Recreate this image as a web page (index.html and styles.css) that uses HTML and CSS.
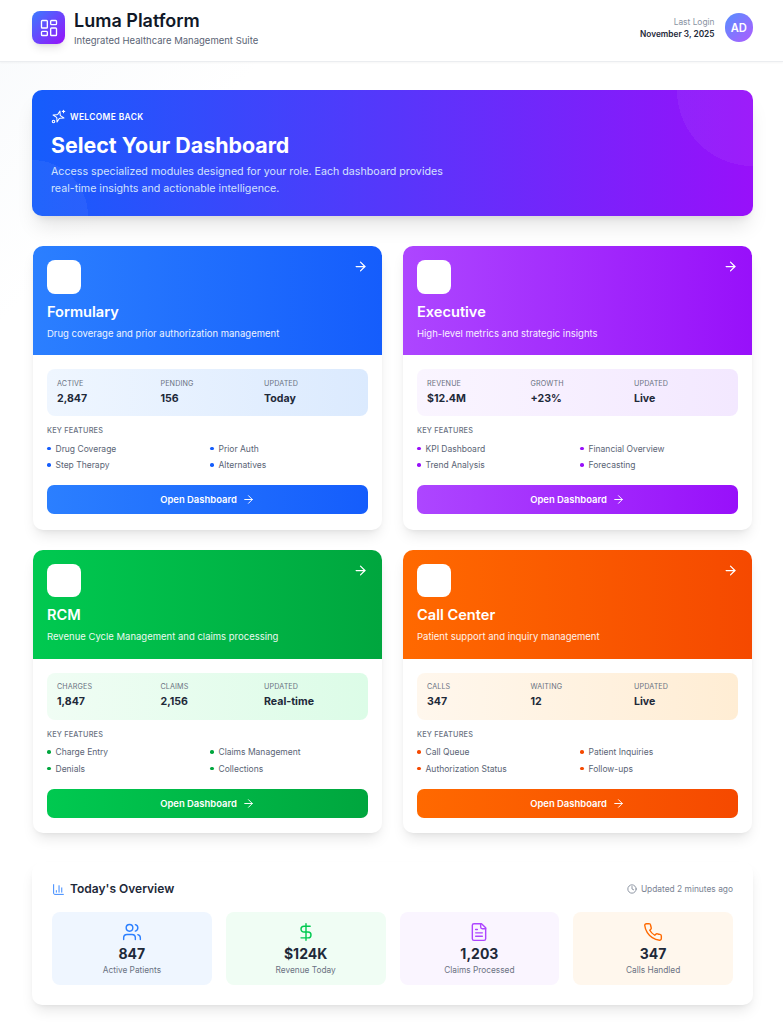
FILE: index.html
```html
<!DOCTYPE html>
<html lang="en">
<head>
<meta charset="utf-8">
<title>Luma Platform</title>
<link rel="stylesheet" href="styles.css">
</head>
<body>
<svg class="defs" width="0" height="0" aria-hidden="true">
  <symbol id="i-arrow" viewBox="0 0 24 24"><path d="M5 12h14"/><path d="m12 5 7 7-7 7"/></symbol>
</svg>
<header class="topbar">
  <div class="brand">
    <div class="logo">
      <svg class="ic" viewBox="0 0 24 24"><rect x="3" y="3" width="7" height="9" rx="1"/><rect x="14" y="3" width="7" height="5" rx="1"/><rect x="14" y="12" width="7" height="9" rx="1"/><rect x="3" y="16" width="7" height="5" rx="1"/></svg>
    </div>
    <div>
      <h1 class="brand-name">Luma Platform</h1>
      <p class="brand-sub">Integrated Healthcare Management Suite</p>
    </div>
  </div>
  <div class="user">
    <div class="login">
      <div class="login-label">Last Login</div>
      <div class="login-date">November 3, 2025</div>
    </div>
    <div class="avatar">AD</div>
  </div>
</header>
<main class="page">
  <section class="hero">
    <div class="hero-eyebrow">
      <svg class="ic hero-ic" viewBox="0 0 24 24"><path d="m12 3-1.9 5.8a2 2 0 0 1-1.3 1.3L3 12l5.8 1.9a2 2 0 0 1 1.3 1.3L12 21l1.9-5.8a2 2 0 0 1 1.3-1.3L21 12l-5.8-1.9a2 2 0 0 1-1.3-1.3Z" transform="rotate(15 12 12)"/><path d="M20 2v4"/><path d="M22 4h-4"/><circle cx="4" cy="20" r="2"/></svg>
      <span>WELCOME BACK</span>
    </div>
    <h2 class="hero-title">Select Your Dashboard</h2>
    <p class="hero-text">Access specialized modules designed for your role. Each dashboard provides real-time insights and actionable intelligence.</p>
  </section>

  <section class="cards">
    <article class="card blue">
      <div class="card-head">
        <div class="card-top"><div class="card-icon"></div><svg class="ic head-arrow"><use href="#i-arrow"/></svg></div>
        <h3 class="card-title">Formulary</h3>
        <p class="card-desc">Drug coverage and prior authorization management</p>
      </div>
      <div class="card-body">
        <div class="stats">
          <div><div class="stat-label">ACTIVE</div><div class="stat-value">2,847</div></div>
          <div><div class="stat-label">PENDING</div><div class="stat-value">156</div></div>
          <div><div class="stat-label">UPDATED</div><div class="stat-value">Today</div></div>
        </div>
        <div class="kf">KEY FEATURES</div>
        <ul class="features"><li>Drug Coverage</li><li>Prior Auth</li><li>Step Therapy</li><li>Alternatives</li></ul>
        <button class="open">Open Dashboard<svg class="ic btn-arrow"><use href="#i-arrow"/></svg></button>
      </div>
    </article>

    <article class="card purple">
      <div class="card-head">
        <div class="card-top"><div class="card-icon"></div><svg class="ic head-arrow"><use href="#i-arrow"/></svg></div>
        <h3 class="card-title">Executive</h3>
        <p class="card-desc">High-level metrics and strategic insights</p>
      </div>
      <div class="card-body">
        <div class="stats">
          <div><div class="stat-label">REVENUE</div><div class="stat-value">$12.4M</div></div>
          <div><div class="stat-label">GROWTH</div><div class="stat-value">+23%</div></div>
          <div><div class="stat-label">UPDATED</div><div class="stat-value">Live</div></div>
        </div>
        <div class="kf">KEY FEATURES</div>
        <ul class="features"><li>KPI Dashboard</li><li>Financial Overview</li><li>Trend Analysis</li><li>Forecasting</li></ul>
        <button class="open">Open Dashboard<svg class="ic btn-arrow"><use href="#i-arrow"/></svg></button>
      </div>
    </article>

    <article class="card green">
      <div class="card-head">
        <div class="card-top"><div class="card-icon"></div><svg class="ic head-arrow"><use href="#i-arrow"/></svg></div>
        <h3 class="card-title">RCM</h3>
        <p class="card-desc">Revenue Cycle Management and claims processing</p>
      </div>
      <div class="card-body">
        <div class="stats">
          <div><div class="stat-label">CHARGES</div><div class="stat-value">1,847</div></div>
          <div><div class="stat-label">CLAIMS</div><div class="stat-value">2,156</div></div>
          <div><div class="stat-label">UPDATED</div><div class="stat-value">Real-time</div></div>
        </div>
        <div class="kf">KEY FEATURES</div>
        <ul class="features"><li>Charge Entry</li><li>Claims Management</li><li>Denials</li><li>Collections</li></ul>
        <button class="open">Open Dashboard<svg class="ic btn-arrow"><use href="#i-arrow"/></svg></button>
      </div>
    </article>

    <article class="card orange">
      <div class="card-head">
        <div class="card-top"><div class="card-icon"></div><svg class="ic head-arrow"><use href="#i-arrow"/></svg></div>
        <h3 class="card-title">Call Center</h3>
        <p class="card-desc">Patient support and inquiry management</p>
      </div>
      <div class="card-body">
        <div class="stats">
          <div><div class="stat-label">CALLS</div><div class="stat-value">347</div></div>
          <div><div class="stat-label">WAITING</div><div class="stat-value">12</div></div>
          <div><div class="stat-label">UPDATED</div><div class="stat-value">Live</div></div>
        </div>
        <div class="kf">KEY FEATURES</div>
        <ul class="features"><li>Call Queue</li><li>Patient Inquiries</li><li>Authorization Status</li><li>Follow-ups</li></ul>
        <button class="open">Open Dashboard<svg class="ic btn-arrow"><use href="#i-arrow"/></svg></button>
      </div>
    </article>
  </section>

  <section class="overview">
    <div class="ov-head">
      <div class="ov-title">
        <svg class="ic ov-title-ic" viewBox="0 0 24 24"><path d="M3 3v16a2 2 0 0 0 2 2h16"/><path d="M18 17V9"/><path d="M13 17V5"/><path d="M8 17v-3"/></svg>
        <h3>Today's Overview</h3>
      </div>
      <div class="ov-updated">
        <svg class="ic ov-clock" viewBox="0 0 24 24"><circle cx="12" cy="12" r="10"/><path d="M12 6v6l4 2"/></svg>
        <span>Updated 2 minutes ago</span>
      </div>
    </div>
    <div class="tiles">
      <div class="tile t-blue">
        <svg class="ic tile-ic" viewBox="0 0 24 24"><path d="M16 21v-2a4 4 0 0 0-4-4H6a4 4 0 0 0-4 4v2"/><circle cx="9" cy="7" r="4"/><path d="M22 21v-2a4 4 0 0 0-3-3.87"/><path d="M16 3.13a4 4 0 0 1 0 7.75"/></svg>
        <div class="tile-value">847</div><div class="tile-label">Active Patients</div>
      </div>
      <div class="tile t-green">
        <svg class="ic tile-ic" viewBox="0 0 24 24"><path d="M12 2v20"/><path d="M17 5H9.5a3.5 3.5 0 0 0 0 7h5a3.5 3.5 0 0 1 0 7H6"/></svg>
        <div class="tile-value">$124K</div><div class="tile-label">Revenue Today</div>
      </div>
      <div class="tile t-purple">
        <svg class="ic tile-ic" viewBox="0 0 24 24"><path d="M15 2H6a2 2 0 0 0-2 2v16a2 2 0 0 0 2 2h12a2 2 0 0 0 2-2V7Z"/><path d="M14 2v4a2 2 0 0 0 2 2h4"/><path d="M10 9H8"/><path d="M16 13H8"/><path d="M16 17H8"/></svg>
        <div class="tile-value">1,203</div><div class="tile-label">Claims Processed</div>
      </div>
      <div class="tile t-orange">
        <svg class="ic tile-ic" viewBox="0 0 24 24"><path d="M22 16.92v3a2 2 0 0 1-2.18 2 19.79 19.79 0 0 1-8.63-3.07 19.5 19.5 0 0 1-6-6 19.79 19.79 0 0 1-3.07-8.67A2 2 0 0 1 4.11 2h3a2 2 0 0 1 2 1.72 12.84 12.84 0 0 0 .7 2.81 2 2 0 0 1-.45 2.11L8.09 9.91a16 16 0 0 0 6 6l1.27-1.27a2 2 0 0 1 2.11-.45 12.84 12.84 0 0 0 2.81.7A2 2 0 0 1 22 16.92z"/></svg>
        <div class="tile-value">347</div><div class="tile-label">Calls Handled</div>
      </div>
    </div>
  </section>
</main>
</body>
</html>
```

FILE: styles.css
```css
* { box-sizing: border-box; }
html, body { margin: 0; padding: 0; }
body {
  font-family: Inter, "Liberation Sans", sans-serif;
  background: linear-gradient(135deg, #f8fafc 0, #ffffff 18%, #ffffff 100%);
  color: #101828;
  min-height: 1024px;
}
h1, h2, h3, p, ul { margin: 0; padding: 0; }
.defs { position: absolute; }
.ic {
  fill: none;
  stroke: currentColor;
  stroke-width: 2;
  stroke-linecap: round;
  stroke-linejoin: round;
  display: block;
  flex: none;
}

.topbar {
  height: 62px;
  background: #fff;
  border-bottom: 1px solid #ebedf0;
  box-shadow: 0 1px 2px rgba(0, 0, 0, .04);
  padding: 0 30px 6px 32px;
  display: flex;
  justify-content: space-between;
  align-items: center;
}
.brand { display: flex; align-items: center; gap: 9px; }
.logo {
  width: 33px;
  height: 33px;
  border-radius: 8px;
  background: linear-gradient(135deg, #3b7bff, #9810fa);
  color: #fff;
  display: flex;
  align-items: center;
  justify-content: center;
  box-shadow: 0 6px 9px -2px rgba(0, 0, 0, .1), 0 3px 4px -3px rgba(0, 0, 0, .1);
}
.logo .ic { width: 20px; height: 20px; stroke-width: 1.6; }
.brand-name { font-size: 18px; line-height: 25px; font-weight: 600; color: #101828; }
.brand-sub { font-size: 9.5px; line-height: 15px; color: #5a6475; }
.user { display: flex; align-items: center; gap: 10px; }
.login { text-align: right; }
.login-label { font-size: 8.4px; line-height: 12px; color: #8a93a3; }
.login-date { font-size: 8.3px; line-height: 12px; font-weight: 600; color: #1e2939; }
.avatar {
  width: 28.5px;
  height: 28.5px;
  border-radius: 50%;
  background: linear-gradient(135deg, #5490ff, #b05cff);
  color: #fff;
  font-size: 11.2px;
  font-weight: 600;
  display: flex;
  align-items: center;
  justify-content: center;
}

.page { padding: 28px 30px 0 32px; }

.hero {
  height: 126px;
  border-radius: 10px;
  background-color: #155dfc;
  background-image:
    radial-gradient(circle 76px at 100% 0, rgba(255, 255, 255, .05) 100%, transparent 100%),
    radial-gradient(circle 56px at 0 100%, rgba(255, 255, 255, .05) 100%, transparent 100%),
    linear-gradient(90deg, #155dfc, #9810fa);
  box-shadow: 0 14px 20px -4px rgba(0, 0, 0, .1), 0 6px 8px -5px rgba(0, 0, 0, .1);
  padding: 19px 19px;
  color: #fff;
}
.hero-eyebrow { display: flex; align-items: center; gap: 4px; font-size: 8.4px; line-height: 14px; font-weight: 600; letter-spacing: .38px; }
.hero-ic { width: 15px; height: 15px; stroke-width: 1.7; }
.hero-title { font-size: 21.4px; line-height: 28px; font-weight: 700; margin-top: 7px; }
.hero-text { font-size: 10.7px; line-height: 17px; color: #dbeafe; max-width: 400px; margin-top: 3.5px; opacity: .95; }

.cards {
  display: grid;
  grid-template-columns: 1fr 1fr;
  column-gap: 21px;
  row-gap: 20px;
  padding: 0 1px;
  margin-top: 30px;
}
.card {
  background: #fff;
  border-radius: 10px;
  overflow: hidden;
  box-shadow: 0 8px 14px -3px rgba(0, 0, 0, .1), 0 3px 6px -4px rgba(0, 0, 0, .1);
}
.blue { --from: #2b7fff; --to: #155dfc; --soft1: #eff6ff; --soft2: #dbeafe; }
.purple { --from: #ad46ff; --to: #9810fa; --soft1: #faf5ff; --soft2: #f3e8ff; }
.green { --from: #00c950; --to: #00a63e; --soft1: #f0fdf4; --soft2: #dcfce7; }
.orange { --from: #ff6900; --to: #f54900; --soft1: #fff7ed; --soft2: #ffedd4; }
.card-head {
  height: 109px;
  padding: 14px 14px 0;
  background: linear-gradient(90deg, var(--from), var(--to));
  color: #fff;
}
.card-top { display: flex; justify-content: space-between; align-items: flex-start; }
.card-icon { width: 33.5px; height: 33.5px; background: #fff; border-radius: 8px; }
.head-arrow { width: 15px; height: 15px; margin-top: -1px; }
.card-title { font-size: 14.6px; line-height: 22px; font-weight: 600; margin-top: 7px; }
.card-desc { font-size: 9.5px; line-height: 14px; margin-top: 4px; opacity: .92; }
.card-body { padding: 14px 14px 15.5px; }
.stats {
  height: 47px;
  border-radius: 8px;
  background: linear-gradient(90deg, var(--soft1), var(--soft2));
  padding: 8.5px 10px 0;
  display: grid;
  grid-template-columns: repeat(3, 1fr);
  column-gap: 9.5px;
}
.stat-label { font-size: 7.2px; line-height: 11px; color: #6a7282; letter-spacing: .1px; }
.stat-value { font-size: 10.6px; line-height: 16px; font-weight: 700; color: #1e2939; margin-top: 2.3px; }
.kf { font-size: 7.3px; line-height: 11px; font-weight: 500; color: #6a7282; letter-spacing: .2px; margin-top: 9px; }
.features {
  list-style: none;
  display: grid;
  grid-template-columns: 1fr 1fr;
  column-gap: 5px;
  row-gap: 2.5px;
  margin-top: 5.5px;
}
.features li {
  font-size: 8.5px;
  line-height: 14px;
  color: #5a6475;
  display: flex;
  align-items: center;
  gap: 5px;
}
.features li::before {
  content: "";
  width: 3.5px;
  height: 3.5px;
  border-radius: 50%;
  background: var(--to);
  flex: none;
}
.open {
  width: 100%;
  height: 29px;
  margin-top: 13px;
  border: 0;
  border-radius: 7px;
  background: linear-gradient(90deg, var(--from), var(--to));
  color: #fff;
  font-family: inherit;
  font-size: 9.45px;
  font-weight: 600;
  display: flex;
  align-items: center;
  justify-content: center;
  gap: 5px;
  padding: 0;
}
.btn-arrow { width: 13px; height: 13px; stroke-width: 1.8; }

.overview {
  margin-top: 29px;
  height: 143px;
  background: #fff;
  border-radius: 10px;
  padding: 20px;
  box-shadow: 0 8px 14px -3px rgba(0, 0, 0, .1), 0 3px 6px -4px rgba(0, 0, 0, .1);
}
.ov-head { display: flex; justify-content: space-between; align-items: center; height: 14px; }
.ov-title { display: flex; align-items: center; gap: 5px; }
.ov-title h3 { font-size: 12px; line-height: 18px; font-weight: 600; color: #1e2939; }
.ov-title-ic { width: 13px; height: 13px; color: #2b7fff; stroke-width: 1.7; }
.ov-updated { display: flex; align-items: center; gap: 4px; font-size: 8.4px; color: #7a8393; }
.ov-clock { width: 10px; height: 10px; }
.tiles {
  display: grid;
  grid-template-columns: repeat(4, 1fr);
  gap: 14px;
  margin-top: 16px;
}
.tile {
  height: 73px;
  border-radius: 8px;
  padding-top: 10px;
  text-align: center;
}
.tile-ic { width: 20px; height: 20px; margin: 0 auto; stroke-width: 1.7; }
.tile-value { font-size: 14px; line-height: 20px; font-weight: 700; color: #1e2939; margin-top: 2px; }
.tile-label { font-size: 8.3px; line-height: 12px; color: #6a7282; }
.t-blue { background: #eff6ff; }
.t-blue .ic { color: #2b7fff; }
.t-green { background: #f0fdf4; }
.t-green .ic { color: #00c950; }
.t-purple { background: #faf5ff; }
.t-purple .ic { color: #ad46ff; }
.t-orange { background: #fff7ed; }
.t-orange .ic { color: #ff6900; }
```
